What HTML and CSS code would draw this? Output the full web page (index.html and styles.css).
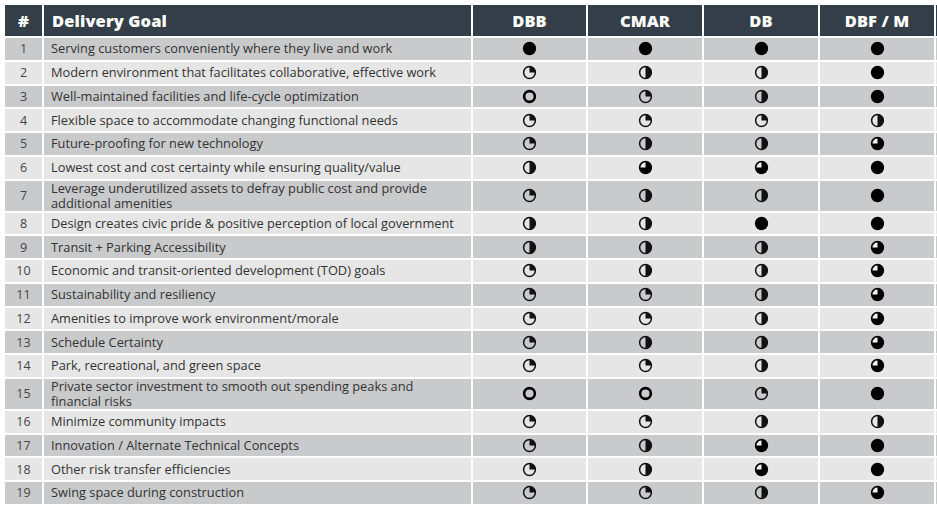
FILE: index.html
```html
<!DOCTYPE html>
<html>
<head>
<meta charset="utf-8">
<link rel="stylesheet" href="styles.css">
</head>
<body>
<svg class="defs" width="0" height="0" aria-hidden="true">
  <defs>
    <symbol id="full" viewBox="0 0 14 14"><circle cx="7" cy="7" r="6.2" fill="#000"/></symbol>
    <symbol id="q" viewBox="0 0 14 14"><circle cx="7" cy="7" r="5.5" fill="none" stroke="#111" stroke-width="1.4"/><path d="M7 7 V1.5 A5.5 5.5 0 0 1 12.5 7 Z" fill="#111"/></symbol>
    <symbol id="h" viewBox="0 0 14 14"><circle cx="7" cy="7" r="5.5" fill="none" stroke="#111" stroke-width="1.4"/><path d="M7 1.5 A5.5 5.5 0 0 1 7 12.5 Z" fill="#111"/></symbol>
    <symbol id="tq" viewBox="0 0 14 14"><circle cx="7" cy="7" r="6.2" fill="#000"/><path d="M7 7 H2.3 A4.7 4.7 0 0 1 7 2.3 Z" fill="#f4f4f4"/></symbol>
    <symbol id="e" viewBox="0 0 14 14"><circle cx="7" cy="7" r="5" fill="none" stroke="#000" stroke-width="2.4"/></symbol>
  </defs>
</svg>
<div class="matrix">
  <div class="row head">
    <div class="cell num">#</div><div class="cell goal">Delivery Goal</div><div class="cell c">DBB</div><div class="cell c">CMAR</div><div class="cell c">DB</div><div class="cell c">DBF / M</div><div class="cell x"></div>
  </div>
  <div class="row dk">
    <div class="cell num">1</div><div class="cell goal">Serving customers conveniently where they live and work</div>
    <div class="cell c"><svg class="hb"><use href="#full"/></svg></div><div class="cell c"><svg class="hb"><use href="#full"/></svg></div><div class="cell c"><svg class="hb"><use href="#full"/></svg></div><div class="cell c"><svg class="hb"><use href="#full"/></svg></div><div class="cell x"></div>
  </div>
  <div class="row lt">
    <div class="cell num">2</div><div class="cell goal">Modern environment that facilitates collaborative, effective work</div>
    <div class="cell c"><svg class="hb"><use href="#q"/></svg></div><div class="cell c"><svg class="hb"><use href="#h"/></svg></div><div class="cell c"><svg class="hb"><use href="#h"/></svg></div><div class="cell c"><svg class="hb"><use href="#full"/></svg></div><div class="cell x"></div>
  </div>
  <div class="row dk">
    <div class="cell num">3</div><div class="cell goal">Well-maintained facilities and life-cycle optimization</div>
    <div class="cell c"><svg class="hb"><use href="#e"/></svg></div><div class="cell c"><svg class="hb"><use href="#q"/></svg></div><div class="cell c"><svg class="hb"><use href="#h"/></svg></div><div class="cell c"><svg class="hb"><use href="#full"/></svg></div><div class="cell x"></div>
  </div>
  <div class="row lt">
    <div class="cell num">4</div><div class="cell goal">Flexible space to accommodate changing functional needs</div>
    <div class="cell c"><svg class="hb"><use href="#q"/></svg></div><div class="cell c"><svg class="hb"><use href="#q"/></svg></div><div class="cell c"><svg class="hb"><use href="#q"/></svg></div><div class="cell c"><svg class="hb"><use href="#h"/></svg></div><div class="cell x"></div>
  </div>
  <div class="row dk">
    <div class="cell num">5</div><div class="cell goal">Future-proofing for new technology</div>
    <div class="cell c"><svg class="hb"><use href="#q"/></svg></div><div class="cell c"><svg class="hb"><use href="#h"/></svg></div><div class="cell c"><svg class="hb"><use href="#h"/></svg></div><div class="cell c"><svg class="hb"><use href="#tq"/></svg></div><div class="cell x"></div>
  </div>
  <div class="row lt">
    <div class="cell num">6</div><div class="cell goal">Lowest cost and cost certainty while ensuring quality/value</div>
    <div class="cell c"><svg class="hb"><use href="#h"/></svg></div><div class="cell c"><svg class="hb"><use href="#tq"/></svg></div><div class="cell c"><svg class="hb"><use href="#tq"/></svg></div><div class="cell c"><svg class="hb"><use href="#full"/></svg></div><div class="cell x"></div>
  </div>
  <div class="row dk">
    <div class="cell num">7</div><div class="cell goal">Leverage underutilized assets to defray public cost and provide<br>additional amenities</div>
    <div class="cell c"><svg class="hb"><use href="#q"/></svg></div><div class="cell c"><svg class="hb"><use href="#h"/></svg></div><div class="cell c"><svg class="hb"><use href="#h"/></svg></div><div class="cell c"><svg class="hb"><use href="#full"/></svg></div><div class="cell x"></div>
  </div>
  <div class="row lt">
    <div class="cell num">8</div><div class="cell goal">Design creates civic pride &amp; positive perception of local government</div>
    <div class="cell c"><svg class="hb"><use href="#h"/></svg></div><div class="cell c"><svg class="hb"><use href="#h"/></svg></div><div class="cell c"><svg class="hb"><use href="#full"/></svg></div><div class="cell c"><svg class="hb"><use href="#full"/></svg></div><div class="cell x"></div>
  </div>
  <div class="row dk">
    <div class="cell num">9</div><div class="cell goal">Transit + Parking Accessibility</div>
    <div class="cell c"><svg class="hb"><use href="#h"/></svg></div><div class="cell c"><svg class="hb"><use href="#h"/></svg></div><div class="cell c"><svg class="hb"><use href="#h"/></svg></div><div class="cell c"><svg class="hb"><use href="#tq"/></svg></div><div class="cell x"></div>
  </div>
  <div class="row lt">
    <div class="cell num">10</div><div class="cell goal">Economic and transit-oriented development (TOD) goals</div>
    <div class="cell c"><svg class="hb"><use href="#q"/></svg></div><div class="cell c"><svg class="hb"><use href="#h"/></svg></div><div class="cell c"><svg class="hb"><use href="#h"/></svg></div><div class="cell c"><svg class="hb"><use href="#tq"/></svg></div><div class="cell x"></div>
  </div>
  <div class="row dk">
    <div class="cell num">11</div><div class="cell goal">Sustainability and resiliency</div>
    <div class="cell c"><svg class="hb"><use href="#q"/></svg></div><div class="cell c"><svg class="hb"><use href="#q"/></svg></div><div class="cell c"><svg class="hb"><use href="#h"/></svg></div><div class="cell c"><svg class="hb"><use href="#tq"/></svg></div><div class="cell x"></div>
  </div>
  <div class="row lt">
    <div class="cell num">12</div><div class="cell goal">Amenities to improve work environment/morale</div>
    <div class="cell c"><svg class="hb"><use href="#q"/></svg></div><div class="cell c"><svg class="hb"><use href="#q"/></svg></div><div class="cell c"><svg class="hb"><use href="#h"/></svg></div><div class="cell c"><svg class="hb"><use href="#tq"/></svg></div><div class="cell x"></div>
  </div>
  <div class="row dk">
    <div class="cell num">13</div><div class="cell goal">Schedule Certainty</div>
    <div class="cell c"><svg class="hb"><use href="#q"/></svg></div><div class="cell c"><svg class="hb"><use href="#h"/></svg></div><div class="cell c"><svg class="hb"><use href="#h"/></svg></div><div class="cell c"><svg class="hb"><use href="#tq"/></svg></div><div class="cell x"></div>
  </div>
  <div class="row lt">
    <div class="cell num">14</div><div class="cell goal">Park, recreational, and green space</div>
    <div class="cell c"><svg class="hb"><use href="#q"/></svg></div><div class="cell c"><svg class="hb"><use href="#q"/></svg></div><div class="cell c"><svg class="hb"><use href="#h"/></svg></div><div class="cell c"><svg class="hb"><use href="#tq"/></svg></div><div class="cell x"></div>
  </div>
  <div class="row dk">
    <div class="cell num">15</div><div class="cell goal">Private sector investment to smooth out spending peaks and<br>financial risks</div>
    <div class="cell c"><svg class="hb"><use href="#e"/></svg></div><div class="cell c"><svg class="hb"><use href="#e"/></svg></div><div class="cell c"><svg class="hb"><use href="#q"/></svg></div><div class="cell c"><svg class="hb"><use href="#full"/></svg></div><div class="cell x"></div>
  </div>
  <div class="row lt">
    <div class="cell num">16</div><div class="cell goal">Minimize community impacts</div>
    <div class="cell c"><svg class="hb"><use href="#q"/></svg></div><div class="cell c"><svg class="hb"><use href="#q"/></svg></div><div class="cell c"><svg class="hb"><use href="#h"/></svg></div><div class="cell c"><svg class="hb"><use href="#h"/></svg></div><div class="cell x"></div>
  </div>
  <div class="row dk">
    <div class="cell num">17</div><div class="cell goal">Innovation / Alternate Technical Concepts</div>
    <div class="cell c"><svg class="hb"><use href="#q"/></svg></div><div class="cell c"><svg class="hb"><use href="#h"/></svg></div><div class="cell c"><svg class="hb"><use href="#tq"/></svg></div><div class="cell c"><svg class="hb"><use href="#full"/></svg></div><div class="cell x"></div>
  </div>
  <div class="row lt">
    <div class="cell num">18</div><div class="cell goal">Other risk transfer efficiencies</div>
    <div class="cell c"><svg class="hb"><use href="#q"/></svg></div><div class="cell c"><svg class="hb"><use href="#h"/></svg></div><div class="cell c"><svg class="hb"><use href="#tq"/></svg></div><div class="cell c"><svg class="hb"><use href="#full"/></svg></div><div class="cell x"></div>
  </div>
  <div class="row dk">
    <div class="cell num">19</div><div class="cell goal">Swing space during construction</div>
    <div class="cell c"><svg class="hb"><use href="#q"/></svg></div><div class="cell c"><svg class="hb"><use href="#q"/></svg></div><div class="cell c"><svg class="hb"><use href="#h"/></svg></div><div class="cell c"><svg class="hb"><use href="#tq"/></svg></div><div class="cell x"></div>
  </div>
</div>
</body>
</html>
```

FILE: styles.css
```css
html, body {
  margin: 0;
  padding: 0;
  background: #ffffff;
  overflow: hidden;
}
body {
  width: 937px;
  height: 506px;
  font-family: "Open Sans", "Liberation Sans", sans-serif;
}
.defs {
  position: absolute;
  width: 0;
  height: 0;
}
.matrix {
  display: grid;
  grid-template-columns: 37px 427px 113px 114px 114px 114px 20px;
  grid-template-rows: 31px repeat(6, 21.75px) 30px repeat(7, 21.75px) 30px repeat(4, 21.75px);
  column-gap: 2px;
  row-gap: 2px;
  padding: 5px 0 0 5px;
}
.row {
  display: contents;
}
.cell {
  display: flex;
  align-items: center;
}
.head .cell {
  background: #343e48;
  color: #ffffff;
  font-weight: 800;
  font-size: 16.5px;
  letter-spacing: 0.1px;
}
.dk .cell {
  background: #c9cacb;
}
.lt .cell {
  background: #e6e6e6;
}
.num {
  justify-content: center;
  font-size: 12.5px;
  color: #454545;
}
.goal {
  padding-left: 7px;
  font-size: 12.8px;
  line-height: 15px;
  color: #333333;
  letter-spacing: 0;
}
.head .goal {
  padding-left: 8px;
}
.c {
  justify-content: center;
}
.hb {
  width: 15px;
  height: 15px;
}
```
